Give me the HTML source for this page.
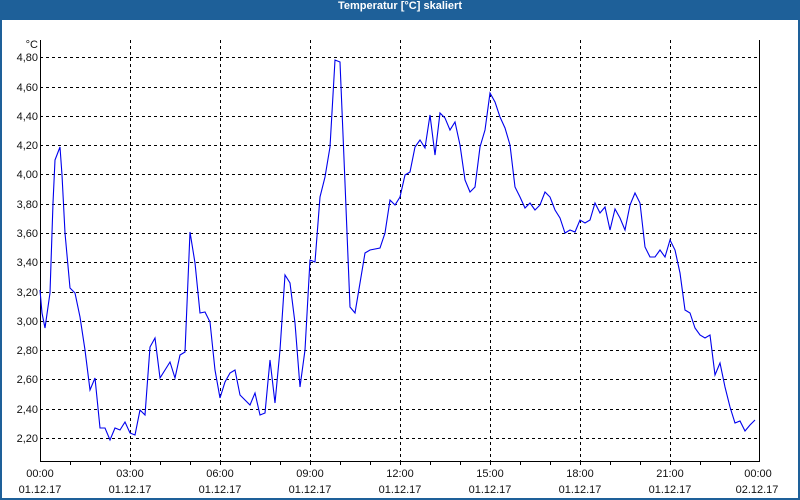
<!DOCTYPE html>
<html><head><meta charset="utf-8"><style>
html,body{margin:0;padding:0;width:800px;height:500px;overflow:hidden;background:#1e6099}
#c{position:absolute;left:2px;top:20px;width:796px;height:478px;background:#fff}
#t{position:absolute;left:0;top:0;width:800px;height:20px;line-height:19px;text-align:center;color:#fff;font:bold 11px "Liberation Sans",sans-serif}
svg{position:absolute;left:0;top:0}
text{font-family:"Liberation Sans",sans-serif;font-size:11px;fill:#111}
</style></head><body>
<div id="t">Temperatur [°C] skaliert</div>
<div id="c"></div>
<svg width="800" height="500" xmlns="http://www.w3.org/2000/svg">
<g stroke="#000" stroke-width="1" stroke-dasharray="3,3" shape-rendering="crispEdges">
<line x1="130.5" y1="40" x2="130.5" y2="461"/><line x1="220.5" y1="40" x2="220.5" y2="461"/><line x1="310.5" y1="40" x2="310.5" y2="461"/><line x1="400.5" y1="40" x2="400.5" y2="461"/><line x1="490.5" y1="40" x2="490.5" y2="461"/><line x1="580.5" y1="40" x2="580.5" y2="461"/><line x1="670.5" y1="40" x2="670.5" y2="461"/>
<line x1="40" y1="57.5" x2="760" y2="57.5"/><line x1="40" y1="87.5" x2="760" y2="87.5"/><line x1="40" y1="116.5" x2="760" y2="116.5"/><line x1="40" y1="145.5" x2="760" y2="145.5"/><line x1="40" y1="174.5" x2="760" y2="174.5"/><line x1="40" y1="204.5" x2="760" y2="204.5"/><line x1="40" y1="233.5" x2="760" y2="233.5"/><line x1="40" y1="262.5" x2="760" y2="262.5"/><line x1="40" y1="292.5" x2="760" y2="292.5"/><line x1="40" y1="321.5" x2="760" y2="321.5"/><line x1="40" y1="350.5" x2="760" y2="350.5"/><line x1="40" y1="379.5" x2="760" y2="379.5"/><line x1="40" y1="409.5" x2="760" y2="409.5"/><line x1="40" y1="438.5" x2="760" y2="438.5"/>
</g>
<g stroke="#000" stroke-width="1" shape-rendering="crispEdges" fill="none">
<polyline points="40.5,40 40.5,461.5 759.5,461.5 759.5,40"/>
<line x1="70.5" y1="461" x2="70.5" y2="465"/><line x1="100.5" y1="461" x2="100.5" y2="465"/><line x1="130.5" y1="461" x2="130.5" y2="465"/><line x1="160.5" y1="461" x2="160.5" y2="465"/><line x1="190.5" y1="461" x2="190.5" y2="465"/><line x1="220.5" y1="461" x2="220.5" y2="465"/><line x1="250.5" y1="461" x2="250.5" y2="465"/><line x1="280.5" y1="461" x2="280.5" y2="465"/><line x1="310.5" y1="461" x2="310.5" y2="465"/><line x1="340.5" y1="461" x2="340.5" y2="465"/><line x1="370.5" y1="461" x2="370.5" y2="465"/><line x1="400.5" y1="461" x2="400.5" y2="465"/><line x1="430.5" y1="461" x2="430.5" y2="465"/><line x1="460.5" y1="461" x2="460.5" y2="465"/><line x1="490.5" y1="461" x2="490.5" y2="465"/><line x1="520.5" y1="461" x2="520.5" y2="465"/><line x1="550.5" y1="461" x2="550.5" y2="465"/><line x1="580.5" y1="461" x2="580.5" y2="465"/><line x1="610.5" y1="461" x2="610.5" y2="465"/><line x1="640.5" y1="461" x2="640.5" y2="465"/><line x1="670.5" y1="461" x2="670.5" y2="465"/><line x1="700.5" y1="461" x2="700.5" y2="465"/><line x1="730.5" y1="461" x2="730.5" y2="465"/>
</g>
<polyline fill="none" stroke="#0000ee" stroke-width="1.1" points="40,290 42,313 45,328 50,293 53,203 55,160 60,147 62,175 65,233 70,288 75,293 80,317 85,350 90,390 95,378 100,428 105,428 110,440 115,428 120,430 125,422 130,433 135,435 140,410 145,415 150,347 155,338 160,378 170,362 175,378 180,355 185,352 190,232 195,263 200,313 205,312 210,322 215,370 220,398 225,382 230,373 235,370 240,395 250,405 255,393 260,415 265,413 270,360 275,403 280,350 285,275 290,283 295,323 300,387 305,350 310,260 315,262 320,197 325,177 330,147 335,60 340,62 345,183 350,307 355,313 360,283 365,253 370,250 380,248 385,233 390,200 395,205 400,197 405,175 410,172 415,147 420,140 425,148 430,115 435,155 440,113 445,118 450,130 455,122 460,145 465,180 470,192 475,187 480,147 485,130 490,93 495,102 500,117 505,128 510,145 515,187 520,197 525,208 530,203 535,210 540,205 545,192 550,197 555,210 560,218 565,233 570,230 575,232 580,220 585,223 590,220 595,203 600,213 605,207 610,230 615,209 620,218 625,230 630,205 635,193 640,203 645,247 650,257 655,257 660,250 665,257 670,240 675,250 680,273 685,310 690,313 695,328 700,335 705,338 710,335 715,375 720,363 725,387 730,407 735,423 740,421 745,431 750,425 755,420"/>
<g text-anchor="end">
<text x="38" y="48">°C</text>
<text x="38" y="61">4,80</text><text x="38" y="91">4,60</text><text x="38" y="120">4,40</text><text x="38" y="149">4,20</text><text x="38" y="178">4,00</text><text x="38" y="208">3,80</text><text x="38" y="237">3,60</text><text x="38" y="266">3,40</text><text x="38" y="296">3,20</text><text x="38" y="325">3,00</text><text x="38" y="354">2,80</text><text x="38" y="383">2,60</text><text x="38" y="413">2,40</text><text x="38" y="442">2,20</text>
</g>
<g text-anchor="middle">
<text x="40" y="477">00:00</text><text x="130" y="477">03:00</text><text x="220" y="477">06:00</text><text x="310" y="477">09:00</text><text x="400" y="477">12:00</text><text x="490" y="477">15:00</text><text x="580" y="477">18:00</text><text x="670" y="477">21:00</text><text x="758" y="477">00:00</text>
<text x="40" y="493">01.12.17</text><text x="130" y="493">01.12.17</text><text x="220" y="493">01.12.17</text><text x="310" y="493">01.12.17</text><text x="400" y="493">01.12.17</text><text x="490" y="493">01.12.17</text><text x="580" y="493">01.12.17</text><text x="670" y="493">01.12.17</text><text x="757" y="493">02.12.17</text>
</g>
</svg>
</body></html>
